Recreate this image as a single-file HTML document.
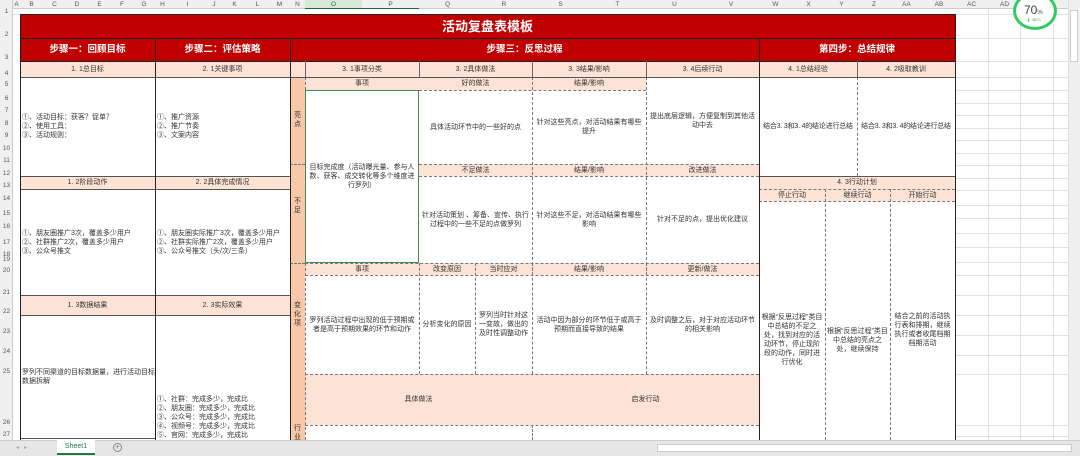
<!DOCTYPE html>
<html><head><meta charset="utf-8"><style>
*{margin:0;padding:0;box-sizing:border-box}
body{width:1080px;height:456px;overflow:hidden;background:#fff;position:relative;font-family:"Liberation Sans","Noto Sans CJK SC",sans-serif;color:#333}
.a{position:absolute}
.c{position:absolute;display:flex;align-items:center;justify-content:center;text-align:center;font-size:7px;line-height:9px;color:#333;padding:0 3px}
.l{justify-content:flex-start;text-align:left;padding-left:2px}
.pk{background:#fde3d6}
.pn{background:#f8c8a8}
.red{background:#c00000;color:#fff;font-weight:bold}
.hl{position:absolute;height:1px;background:#e2e2e2}
.vl{position:absolute;width:1px;background:#e2e2e2}
.dh{position:absolute;height:0;border-top:1px dashed #777}
.dv{position:absolute;width:0;border-left:1px dashed #777}
.bh{position:absolute;height:1px;background:#222}
.bv{position:absolute;width:1px;background:#222}
.ch{position:absolute;top:0;height:9px;font-size:6.5px;color:#555;text-align:center;line-height:9px}
.rn{position:absolute;left:0;width:13px;font-size:6.5px;color:#555;text-align:center}
</style></head><body>
<div class="a" style="left:0;top:0;width:1068px;height:9px;background:#f0f0f0;border-bottom:1px solid #ccc"></div>
<div class="a" style="left:0;top:0;width:13px;height:440px;background:#f0f0f0;border-right:1px solid #ccc"></div>
<div class="ch" style="left:13px;width:7px">A</div>
<div class="ch" style="left:20px;width:23px">B</div><div class="ch" style="left:43px;width:23px">C</div><div class="ch" style="left:66px;width:22px">D</div><div class="ch" style="left:88px;width:23px">E</div><div class="ch" style="left:111px;width:22px">F</div><div class="ch" style="left:133px;width:22px">G</div>
<div class="ch" style="left:155px;width:15px">H</div><div class="ch" style="left:170px;width:35px">I</div><div class="ch" style="left:205px;width:18px">J</div><div class="ch" style="left:223px;width:23px">K</div><div class="ch" style="left:246px;width:23px">L</div><div class="ch" style="left:269px;width:21px">M</div>
<div class="ch" style="left:290px;width:15px">N</div><div class="ch" style="left:305px;width:57px;background:#d8e8d8;color:#1e6b3a">O</div><div class="ch" style="left:362px;width:57px">P</div>
<div class="ch" style="left:419px;width:57px">Q</div><div class="ch" style="left:476px;width:56px">R</div><div class="ch" style="left:532px;width:57px">S</div><div class="ch" style="left:589px;width:57px">T</div><div class="ch" style="left:646px;width:57px">U</div><div class="ch" style="left:703px;width:56px">V</div>
<div class="ch" style="left:759px;width:33px">W</div><div class="ch" style="left:792px;width:33px">X</div><div class="ch" style="left:825px;width:33px">Y</div><div class="ch" style="left:858px;width:32px">Z</div><div class="ch" style="left:890px;width:33px">AA</div><div class="ch" style="left:923px;width:32px">AB</div><div class="ch" style="left:955px;width:33px">AC</div><div class="ch" style="left:988px;width:33px">AD</div>
<div class="a" style="left:305px;top:8px;width:114px;height:1px;background:#1e6b3a"></div>
<div class="rn" style="top:8px">1</div><div class="rn" style="top:31px">2</div><div class="rn" style="top:54px">3</div><div class="rn" style="top:70px">4</div><div class="rn" style="top:81px">5</div><div class="rn" style="top:95px">6</div><div class="rn" style="top:107px">7</div><div class="rn" style="top:120px">8</div><div class="rn" style="top:132px">9</div><div class="rn" style="top:145px">10</div><div class="rn" style="top:157px">11</div><div class="rn" style="top:170px">12</div><div class="rn" style="top:182px">13</div><div class="rn" style="top:195px">14</div><div class="rn" style="top:210px">15</div><div class="rn" style="top:223px">16</div><div class="rn" style="top:239px">17</div><div class="rn" style="top:251px">18</div><div class="rn" style="top:256px">19</div><div class="rn" style="top:267px">20</div><div class="rn" style="top:289px">21</div><div class="rn" style="top:308px">22</div><div class="rn" style="top:328px">23</div><div class="rn" style="top:348px">24</div><div class="rn" style="top:368px">25</div><div class="rn" style="top:419px">26</div><div class="rn" style="top:431px">27</div>
<div class="vl" style="left:988px;top:9px;height:431px"></div><div class="vl" style="left:1020px;top:9px;height:431px"></div><div class="vl" style="left:1053px;top:9px;height:431px"></div>
<div class="hl" style="left:955px;top:14px;width:113px"></div><div class="hl" style="left:955px;top:38px;width:113px"></div><div class="hl" style="left:955px;top:61px;width:113px"></div><div class="hl" style="left:955px;top:77px;width:113px"></div><div class="hl" style="left:955px;top:90px;width:113px"></div><div class="hl" style="left:955px;top:103px;width:113px"></div><div class="hl" style="left:955px;top:115px;width:113px"></div><div class="hl" style="left:955px;top:128px;width:113px"></div><div class="hl" style="left:955px;top:140px;width:113px"></div><div class="hl" style="left:955px;top:153px;width:113px"></div><div class="hl" style="left:955px;top:165px;width:113px"></div><div class="hl" style="left:955px;top:178px;width:113px"></div><div class="hl" style="left:955px;top:190px;width:113px"></div><div class="hl" style="left:955px;top:205px;width:113px"></div><div class="hl" style="left:955px;top:218px;width:113px"></div><div class="hl" style="left:955px;top:233px;width:113px"></div><div class="hl" style="left:955px;top:247px;width:113px"></div><div class="hl" style="left:955px;top:262px;width:113px"></div><div class="hl" style="left:955px;top:275px;width:113px"></div><div class="hl" style="left:955px;top:295px;width:113px"></div><div class="hl" style="left:955px;top:315px;width:113px"></div><div class="hl" style="left:955px;top:335px;width:113px"></div><div class="hl" style="left:955px;top:355px;width:113px"></div><div class="hl" style="left:955px;top:374px;width:113px"></div><div class="hl" style="left:955px;top:425px;width:113px"></div><div class="hl" style="left:955px;top:436px;width:113px"></div>
<div class="hl" style="left:13px;top:14px;width:942px"></div>
<div class="c red" style="left:20px;top:14px;width:935px;height:24px;font-size:13px">活动复盘表模板</div>
<div class="c red" style="left:20px;top:38px;width:135px;height:23px;font-size:9.5px">步骤一：回顾目标</div>
<div class="c red" style="left:155px;top:38px;width:135px;height:23px;font-size:9.5px">步骤二：评估策略</div>
<div class="c red" style="left:290px;top:38px;width:469px;height:23px;font-size:9.5px">步骤三：反思过程</div>
<div class="c red" style="left:759px;top:38px;width:196px;height:23px;font-size:9.5px">第四步：总结规律</div>
<div class="c pk" style="left:20px;top:61px;width:135px;height:16px">1. 1总目标</div>
<div class="c pk" style="left:155px;top:61px;width:135px;height:16px">2. 1关键事项</div>
<div class="c l" style="left:20px;top:77px;width:135px;height:99px">①、活动目标：获客？促单？<br>②、使用工具：<br>③、活动规则：</div>
<div class="c l" style="left:155px;top:77px;width:135px;height:99px">①、推广资源<br>②、推广节奏<br>③、文案内容</div>
<div class="c pk" style="left:20px;top:176px;width:135px;height:13px">1. 2阶段动作</div>
<div class="c pk" style="left:155px;top:176px;width:135px;height:13px">2. 2具体完成情况</div>
<div class="c l" style="left:20px;top:189px;width:135px;height:106px">①、朋友圈推广3次，覆盖多少用户<br>②、社群推广2次，覆盖多少用户<br>③、公众号推文</div>
<div class="c l" style="left:155px;top:189px;width:135px;height:106px">①、朋友圈实际推广3次，覆盖多少用户<br>②、社群实际推广2次，覆盖多少用户<br>③、公众号推文（头/次/三条）</div>
<div class="c pk" style="left:20px;top:295px;width:135px;height:20px">1. 3数据结果</div>
<div class="c pk" style="left:155px;top:295px;width:135px;height:20px">2. 3实际效果</div>
<div class="c l" style="left:20px;top:315px;width:135px;height:123px;padding:0 0 0 2px;white-space:nowrap">罗列不同渠道的目标数据量，进行活动目标<br>数据拆解</div>
<div class="c l" style="left:155px;top:370px;width:135px;height:70px;align-items:flex-end">①、社群：完成多少，完成比<br>②、朋友圈：完成多少，完成比<br>③、公众号：完成多少，完成比<br>④、视频号：完成多少，完成比<br>⑤、官网：完成多少，完成比</div>
<div class="c pk" style="left:290px;top:61px;width:469px;height:16px"></div>
<div class="c" style="left:305px;top:61px;width:114px;height:16px">3. 1事项分类</div>
<div class="c" style="left:419px;top:61px;width:113px;height:16px">3. 2具体做法</div>
<div class="c" style="left:532px;top:61px;width:114px;height:16px">3. 3结果/影响</div>
<div class="c" style="left:646px;top:61px;width:113px;height:16px">3. 4后续行动</div>
<div class="c pn" style="left:290px;top:77px;width:15px;height:363px"></div>
<div class="c" style="left:290px;top:108px;width:15px;height:24px">亮<br>点</div>
<div class="c" style="left:290px;top:194px;width:15px;height:24px">不<br>足</div>
<div class="c" style="left:290px;top:298px;width:15px;height:32px">变<br>化<br>项</div>
<div class="c" style="left:290px;top:424px;width:15px;height:16px;align-items:flex-start">行<br>业</div>
<div class="dh" style="left:290px;top:164px;width:15px"></div><div class="dh" style="left:290px;top:263px;width:15px"></div>
<div class="c pk" style="left:305px;top:77px;width:114px;height:13px">事项</div>
<div class="c pk" style="left:419px;top:77px;width:113px;height:13px">好的做法</div>
<div class="c pk" style="left:532px;top:77px;width:114px;height:13px">结果/影响</div>
<div class="c" style="left:305px;top:90px;width:114px;height:173px;border:1.5px solid #3f8a55;padding:0 3px">目标完成度（活动曝光量、参与人数、获客、成交转化等多个维度进行罗列）</div>
<div class="c" style="left:419px;top:90px;width:113px;height:74px">具体活动环节中的一些好的点</div>
<div class="c" style="left:532px;top:90px;width:114px;height:74px">针对这些亮点，对活动结果有哪些提升</div>
<div class="c" style="left:646px;top:77px;width:113px;height:87px">提出底层逻辑，方便复制到其他活动中去</div>
<div class="c pk" style="left:419px;top:164px;width:113px;height:12px">不足做法</div>
<div class="c pk" style="left:532px;top:164px;width:114px;height:12px">结果/影响</div>
<div class="c pk" style="left:646px;top:164px;width:113px;height:12px">改进做法</div>
<div class="c" style="left:419px;top:176px;width:113px;height:87px">针对活动策划 、筹备、宣传、执行过程中的一些不足的点做罗列</div>
<div class="c" style="left:532px;top:176px;width:114px;height:87px">针对这些不足，对活动结果有哪些影响</div>
<div class="c" style="left:646px;top:176px;width:113px;height:87px">针对不足的点，提出优化建议</div>
<div class="c pk" style="left:305px;top:263px;width:454px;height:12px"></div>
<div class="c" style="left:305px;top:263px;width:114px;height:12px">事项</div>
<div class="c" style="left:419px;top:263px;width:56px;height:12px">改变原因</div>
<div class="c" style="left:475px;top:263px;width:57px;height:12px">当时应对</div>
<div class="c" style="left:532px;top:263px;width:114px;height:12px">结果/影响</div>
<div class="c" style="left:646px;top:263px;width:113px;height:12px">更新/做法</div>
<div class="c" style="left:305px;top:275px;width:114px;height:99px">罗列活动过程中出现的低于预期或者是高于预期效果的环节和动作</div>
<div class="c" style="left:419px;top:275px;width:56px;height:99px">分析变化的原因</div>
<div class="c" style="left:475px;top:275px;width:57px;height:99px">罗列当时针对这一变故，做出的及时性调整动作</div>
<div class="c" style="left:532px;top:275px;width:114px;height:99px">活动中因为部分的环节低于或高于预期而直接导致的结果</div>
<div class="c" style="left:646px;top:275px;width:113px;height:99px">及时调整之后，对于对应活动环节的相关影响</div>
<div class="c pk" style="left:305px;top:374px;width:227px;height:51px">具体做法</div>
<div class="c pk" style="left:532px;top:374px;width:227px;height:51px">启发行动</div>
<div class="dh" style="left:419px;top:90px;width:227px"></div>
<div class="dh" style="left:419px;top:164px;width:340px"></div><div class="dh" style="left:419px;top:176px;width:340px"></div>
<div class="dh" style="left:305px;top:263px;width:454px"></div><div class="dh" style="left:305px;top:275px;width:454px"></div>
<div class="dh" style="left:305px;top:374px;width:454px"></div><div class="dh" style="left:305px;top:425px;width:454px"></div>
<div class="dv" style="left:532px;top:77px;height:198px"></div><div class="dv" style="left:646px;top:77px;height:198px"></div>
<div class="dv" style="left:419px;top:263px;height:111px"></div><div class="dv" style="left:475px;top:263px;height:111px"></div><div class="dv" style="left:532px;top:263px;height:111px"></div><div class="dv" style="left:646px;top:263px;height:111px"></div><div class="dv" style="left:532px;top:425px;height:15px"></div>
<div class="dv" style="left:305px;top:77px;height:13px"></div><div class="dv" style="left:305px;top:263px;height:177px"></div>
<div class="c pk" style="left:759px;top:61px;width:98px;height:16px">4. 1总结经验</div>
<div class="c pk" style="left:857px;top:61px;width:98px;height:16px">4. 2吸取教训</div>
<div class="c" style="left:759px;top:77px;width:98px;height:99px;padding:0;white-space:nowrap;letter-spacing:-0.2px">结合3. 3和3. 4的结论进行总结</div>
<div class="c" style="left:857px;top:77px;width:98px;height:99px;padding:0;white-space:nowrap;letter-spacing:-0.2px">结合3. 3和3. 4的结论进行总结</div>
<div class="dv" style="left:857px;top:77px;height:99px"></div>
<div class="c pk" style="left:759px;top:176px;width:196px;height:13px">4. 3行动计划</div>
<div class="c pk" style="left:759px;top:189px;width:66px;height:12px">停止行动</div>
<div class="c pk" style="left:825px;top:189px;width:65px;height:12px">继续行动</div>
<div class="c pk" style="left:890px;top:189px;width:65px;height:12px">开始行动</div>
<div class="dh" style="left:759px;top:189px;width:196px"></div><div class="dh" style="left:759px;top:201px;width:196px"></div>
<div class="dv" style="left:825px;top:189px;height:251px"></div><div class="dv" style="left:890px;top:189px;height:251px"></div>
<div class="c" style="left:760px;top:300px;width:64px;height:80px;padding:0 1px">根据“反思过程”类目中总结的不足之处，找到对应的活动环节，停止现阶段的动作，同时进行优化</div>
<div class="c" style="left:826px;top:300px;width:63px;height:80px;padding:0 1px">根据“反思过程”类目中总结的亮点之处，继续保持</div>
<div class="c" style="left:891px;top:300px;width:63px;height:60px;padding:0 1px">结合之前的活动执行表和排期，继续执行或者收尾档期档期活动</div>
<div class="bh" style="left:20px;top:14px;width:936px"></div>
<div class="bh" style="left:20px;top:38px;width:936px"></div>
<div class="bh" style="left:20px;top:61px;width:936px"></div>
<div class="bh" style="left:20px;top:77px;width:936px;background:#555"></div>
<div class="bh" style="left:20px;top:176px;width:270px;background:#555"></div>
<div class="bh" style="left:20px;top:189px;width:270px;background:#555"></div>
<div class="bh" style="left:759px;top:176px;width:196px;background:#555"></div>
<div class="bh" style="left:20px;top:295px;width:270px;background:#555"></div>
<div class="bh" style="left:20px;top:315px;width:270px;background:#555"></div>
<div class="bh" style="left:20px;top:438px;width:135px;background:#555"></div>
<div class="bv" style="left:20px;top:14px;height:426px"></div>
<div class="bv" style="left:155px;top:38px;height:402px"></div>
<div class="bv" style="left:290px;top:38px;height:402px"></div>
<div class="bv" style="left:759px;top:38px;height:402px"></div>
<div class="bv" style="left:955px;top:14px;height:426px"></div>
<div class="a" style="left:419px;top:61px;width:1px;height:16px;background:#666"></div>
<div class="a" style="left:532px;top:61px;width:1px;height:16px;background:#666"></div>
<div class="a" style="left:646px;top:61px;width:1px;height:16px;background:#666"></div>
<div class="a" style="left:305px;top:61px;width:1px;height:16px;background:#666"></div>
<div class="a" style="left:857px;top:61px;width:1px;height:16px;background:#666"></div>
<div class="a" style="left:1013px;top:-8px;width:44px;height:38px;border-radius:50%;border:3px solid #2ecc60;background:#fff"></div>
<div class="a" style="left:1024px;top:3px;font-size:12px;color:#444">70<span style="font-size:6px">%</span></div>
<div class="a" style="left:1026px;top:17px;font-size:4px;color:#2a2">🌡 35°C</div>
<div class="a" style="left:1068px;top:0;width:12px;height:440px;background:#f0f0f0;border-left:1px solid #ddd"></div>
<div class="a" style="left:1070px;top:10px;width:8px;height:52px;background:#fff;border:1px solid #ccc"></div>
<div class="a" style="left:0;top:440px;width:1080px;height:16px;background:#e6e6e6;border-top:1px solid #ccc"></div>
<div class="a" style="left:16px;top:444px;font-size:6px;color:#aaa">◂ &nbsp; ▸</div>
<div class="a" style="left:57px;top:440px;width:38px;height:15px;background:#fff;border-bottom:2px solid #1e7a45;font-size:7px;color:#1e7a45;text-align:center;line-height:13px">Sheet1</div>
<div class="a" style="left:113px;top:443px;width:9px;height:9px;border:1px solid #888;border-radius:50%;font-size:7px;line-height:7px;text-align:center;color:#666">+</div>
<div class="a" style="left:657px;top:444px;width:415px;height:8px;background:#fff;border:1px solid #ccc"></div>
</body></html>
